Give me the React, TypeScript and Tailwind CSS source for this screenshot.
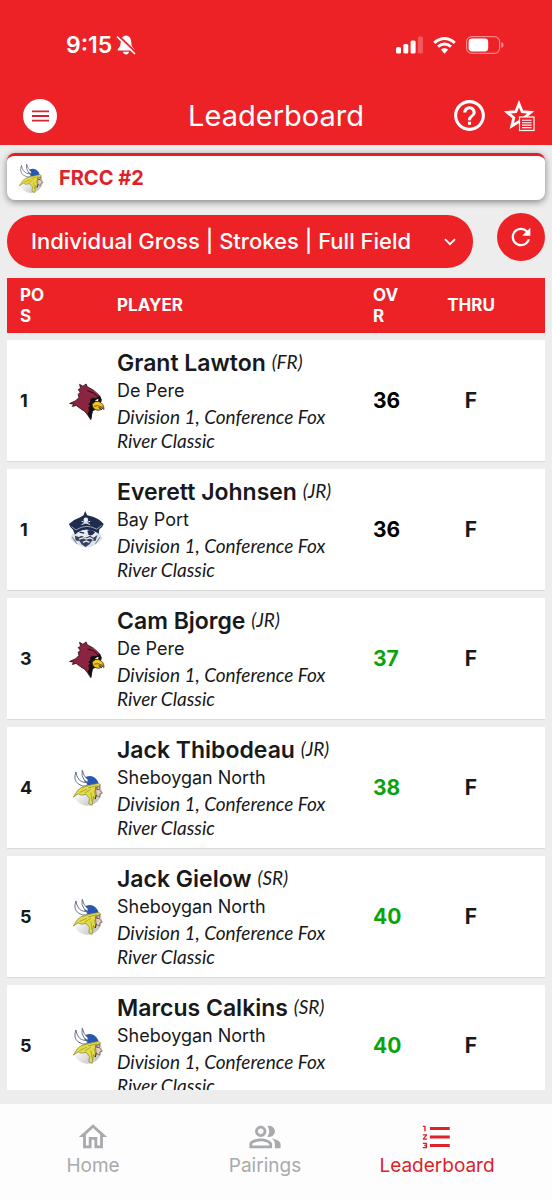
import { useState } from 'react';
import type { IconType } from 'react-icons';
import {
  MdFormatListNumbered,
  MdHelpOutline,
  MdOutlineHome,
  MdOutlinePeopleAlt,
  MdRefresh,
} from 'react-icons/md';

type Team = 'cardinal' | 'pirate' | 'viking';

type Player = {
  pos: number;
  name: string;
  year: string;
  school: string;
  team: Team;
  score: number;
  over: boolean;
};

const DIVISION = 'Division 1, Conference Fox River Classic';

const PLAYERS: Player[] = [
  { pos: 1, name: 'Grant Lawton', year: 'FR', school: 'De Pere', team: 'cardinal', score: 36, over: false },
  { pos: 1, name: 'Everett Johnsen', year: 'JR', school: 'Bay Port', team: 'pirate', score: 36, over: false },
  { pos: 3, name: 'Cam Bjorge', year: 'JR', school: 'De Pere', team: 'cardinal', score: 37, over: true },
  { pos: 4, name: 'Jack Thibodeau', year: 'JR', school: 'Sheboygan North', team: 'viking', score: 38, over: true },
  { pos: 5, name: 'Jack Gielow', year: 'SR', school: 'Sheboygan North', team: 'viking', score: 40, over: true },
  { pos: 5, name: 'Marcus Calkins', year: 'SR', school: 'Sheboygan North', team: 'viking', score: 40, over: true },
];

const TABS: { label: string; icon: IconType }[] = [
  { label: 'Home', icon: MdOutlineHome },
  { label: 'Pairings', icon: MdOutlinePeopleAlt },
  { label: 'Leaderboard', icon: MdFormatListNumbered },
];

function Cardinal() {
  return (
    <svg viewBox="25 33 115 115" className="size-[38px]" aria-hidden="true">
      <path d="M60 40 L70 46 L80 39 L83 47 Q104 56 118 72 L126 86 L120 98 L108 112 L98 122 L94 147 L84 132 L76 122 Q62 114 50 104 L38 107 L42 100 L30 98 L48 90 L58 80 L56 70 L62 64 L56 56 L63 52 Z" fill="#8a2440" stroke="#2a0d14" strokeWidth="2.5" strokeLinejoin="round" />
      <path d="M92 86 Q98 78 110 82 L122 74 L127 92 L106 104 L112 116 L100 120 L95 146 L84 130 Q92 118 86 112 L92 104 L86 100 L93 94 Z" fill="#121013" />
      <path d="M84 60 Q104 62 118 80" fill="none" stroke="#2a0d14" strokeWidth="3" />
      <path d="M98 100 Q108 88 118 92 Q134 98 134 116 Q128 110 118 111 L128 116 Q116 121 106 116 Q98 110 98 100Z" fill="#f3c524" stroke="#3a2a08" strokeWidth="2.5" />
      <path d="M104 106 Q116 102 131 110" fill="none" stroke="#3a2a08" strokeWidth="2" />
      <path d="M106 89 L117 84 L116 91 Z" fill="#fff" />
    </svg>
  );
}

function Pirate() {
  return (
    <svg viewBox="25 33 115 115" className="size-[38px]" aria-hidden="true">
      <path d="M38 100 L122 98 L130 116 Q112 140 80 144 Q48 138 32 116 Z" fill="#dfe3e8" />
      <path d="M28 72 Q44 58 62 52 L72 46 L77 33 L83 46 L98 50 Q118 56 133 72 Q130 82 120 88 L118 102 Q80 76 46 104 L40 90 Q32 84 28 72 Z" fill="#1d2c4f" />
      <path d="M36 80 Q44 88 50 90 Q80 70 112 88 Q120 84 126 76" fill="none" stroke="#b4bccb" strokeWidth="2.5" />
      <circle cx="79" cy="60" r="7" fill="#edf0f4" />
      <path d="M66 64 L92 74 M92 64 L66 74" stroke="#edf0f4" strokeWidth="3" />
      <path d="M54 98 Q80 82 108 98 L106 116 L54 116 Z" fill="#eceef1" />
      <path d="M60 97 L74 100 M86 94 Q96 90 104 98 Q98 107 88 104Z" stroke="#1d2c4f" strokeWidth="4" fill="#1d2c4f" />
      <path d="M46 108 L58 112 L66 108 L78 114 L92 108 L102 114 L114 106 L108 124 L98 122 L90 134 L78 142 L66 134 L60 124 L48 122 Z" fill="#34425f" />
      <path d="M58 118 L72 114 L80 118 L92 114 L102 120 M70 128 L80 124 L90 128 M76 102 L82 108 L86 101" fill="none" stroke="#dfe3e8" strokeWidth="4" />
      <path d="M38 112 L52 132 M122 112 L108 132" stroke="#68758f" strokeWidth="3" />
    </svg>
  );
}

function Viking({ className }: { className: string }) {
  return (
    <svg viewBox="25 33 115 115" className={className} aria-hidden="true">
      <defs>
        <linearGradient id="vikingDisc" x1="0" y1="0" x2="1" y2="1">
          <stop offset="0.3" stopColor="#ffffff" />
          <stop offset="1" stopColor="#b4b4b8" />
        </linearGradient>
      </defs>
      <circle cx="84" cy="101" r="43" fill="url(#vikingDisc)" />
      <path d="M74 60 Q88 50 104 58 Q116 66 117 78 L86 82 Q72 74 74 60Z" fill="#2657b4" />
      <path d="M49 42 Q40 66 56 78 Q68 88 84 84 L82 74 Q62 74 55 60 Q50 52 49 42Z" fill="#fff" stroke="#4a5670" strokeWidth="2.5" />
      <path d="M68 37 Q64 54 74 66 L84 74 L86 66 Q72 56 68 37Z" fill="#fff" stroke="#4a5670" strokeWidth="2.5" />
      <path d="M64 90 L84 84 L118 76 L124 82 L108 88 L116 100 L112 112 L106 124 L102 116 L98 143 L88 138 L90 122 L80 110 L64 112 L56 108 L41 118 L54 98 Z" fill="#e4dc45" stroke="#7d7a30" strokeWidth="2" />
      <path d="M108 90 L122 86 L120 96 L129 106 L122 108 L120 118 L110 112 Z" fill="#e9cdb3" stroke="#51474a" strokeWidth="2" />
      <path d="M60 104 L82 94 M76 106 L94 94 M94 104 L98 130 M86 90 L112 84 M104 98 L108 114" stroke="#8c8833" strokeWidth="2" />
      <path d="M110 93 L118 95 M110 112 L108 124" stroke="#2d2a37" strokeWidth="3" />
    </svg>
  );
}

function TeamLogo({ team }: { team: Team }) {
  if (team === 'cardinal') return <Cardinal />;
  if (team === 'pirate') return <Pirate />;
  return <Viking className="size-[38px]" />;
}

function StatusBar() {
  return (
    <div className="flex h-[90px] items-center justify-between pr-[48px] pl-[66px]">
      <div className="flex items-center gap-1">
        <span className="text-[23px] leading-7 font-semibold">9:15</span>
        <svg viewBox="0 0 20 20" className="size-5" aria-hidden="true">
          <path d="M10 0.5 C6.5 0.8 5 3.5 4.8 7 C4.6 11 3.5 12.5 1.8 14 Q1 15.5 2.5 15.5 H17.5 Q19 15.5 18.2 14 C16.5 12.5 15.4 11 15.2 7 C15 3.5 13.5 0.8 10 0.5Z M6.8 16.8 H13.2 Q12.5 19.5 10 19.5 Q7.5 19.5 6.8 16.8Z" fill="#fff" />
          <path d="M2.4 0.6 L20 17.6" stroke="#ed2227" strokeWidth="2" />
          <path d="M1 1.6 L19 19" stroke="#fff" strokeWidth="1.6" />
        </svg>
      </div>
      <div className="flex items-center gap-[10px]">
        <svg viewBox="0 0 27 18" className="h-[18px] w-[27px]" fill="#fff" aria-hidden="true">
          <rect x="0" y="11" width="5" height="6.5" rx="1.5" />
          <rect x="7.3" y="8" width="5" height="9.5" rx="1.5" />
          <rect x="14.6" y="4.5" width="5" height="13" rx="1.5" />
          <rect x="21.9" y="0.5" width="5" height="17" rx="1.5" opacity="0.25" />
        </svg>
        <svg viewBox="0 0 23 17" className="h-[17px] w-[23px]" fill="none" stroke="#fff" strokeWidth="3" aria-hidden="true">
          <path d="M1.2 5.8 Q11.5 -2.8 21.8 5.8" />
          <path d="M5 9.7 Q11.5 4.4 18 9.7" />
          <path d="M7.8 12.6 Q11.5 9.8 15.2 12.6 L11.5 16.8Z" fill="#fff" stroke="none" />
        </svg>
        <svg viewBox="0 0 38 18" className="h-[18px] w-[38px]" aria-hidden="true">
          <rect x="0.6" y="0.6" width="33" height="16.8" rx="5.2" fill="none" stroke="#fff" strokeOpacity="0.45" strokeWidth="1.2" />
          <rect x="2.6" y="2.6" width="19.6" height="12.8" rx="3.4" fill="#fff" />
          <path d="M35.4 6 Q37.6 7 37.6 9 Q37.6 11 35.4 12Z" fill="#fff" fillOpacity="0.5" />
        </svg>
      </div>
    </div>
  );
}

function TitleBar() {
  return (
    <div className="grid grid-cols-[1fr_auto_1fr] items-center px-4">
      <button aria-label="Menu" className="ml-[7px] flex size-[34px] items-center justify-center rounded-full bg-white">
        <svg viewBox="0 0 17 12" className="h-3 w-[17px]" stroke="#d3262c" strokeWidth="1.8" aria-hidden="true">
          <path d="M0 1.4H17M0 6H17M0 10.6H17" />
        </svg>
      </button>
      <h1 className="text-[29px] leading-9 font-normal">Leaderboard</h1>
      <div className="flex items-center justify-end gap-[14px]">
        <button aria-label="Help">
          <MdHelpOutline className="size-[37px]" />
        </button>
        <button aria-label="Favorites">
          <svg viewBox="0 0 34 34" className="size-[34px]" aria-hidden="true">
            <path d="M17 4.8 L20.2 12.7 L28.7 13.3 L22.2 18.8 L24.2 27 L17 22.6 L9.8 27 L11.8 18.8 L5.3 13.3 L13.8 12.7Z" fill="none" stroke="#fff" strokeWidth="2.8" />
            <rect x="17.5" y="18" width="14.5" height="13.5" fill="#ed2227" stroke="#fff" strokeWidth="1.2" />
            <path d="M20 21.2H29.6M20 23.7H29.6M20 26.1H29.6M20 28.6H29.6" stroke="#fff" strokeWidth="1.1" />
          </svg>
        </button>
      </div>
    </div>
  );
}

function PlayerRow({ player }: { player: Player }) {
  return (
    <tr className="h-[122px] bg-white">
      <td className="border-b border-[#d9dade] pl-[13px] text-[18px] font-bold">{player.pos}</td>
      <td className="border-b border-[#d9dade]">
        <div className="flex justify-center">
          <TeamLogo team={player.team} />
        </div>
      </td>
      <td className="border-b border-[#d9dade] pr-6">
        <div className="text-[23px] leading-7 font-semibold">
          {player.name} <span className="align-[2px] font-[Lato,sans-serif] text-[19px] leading-5 font-normal italic">({player.year})</span>
        </div>
        <div className="text-[18px] leading-7">{player.school}</div>
        <div className="font-[Lato,sans-serif] text-[19px] leading-6 italic">{DIVISION}</div>
      </td>
      <td className={player.over ? 'border-b border-[#d9dade] text-[21px] font-bold text-[#09a40c]' : 'border-b border-[#d9dade] text-[21px] font-bold text-black'}>
        {player.score}
      </td>
      <td className="border-b border-[#d9dade] pr-[23px] text-center text-[21px] font-bold">F</td>
    </tr>
  );
}

export default function App() {
  const [tab, setTab] = useState('Leaderboard');

  return (
    <div className="flex h-screen flex-col bg-[#ededed] font-[Inter,sans-serif] text-[#18191b]">
      <header className="flex shrink-0 flex-col gap-[7px] bg-[#ed2227] pb-[11px] text-white">
        <StatusBar />
        <TitleBar />
      </header>

      <main className="flex min-h-0 flex-1 flex-col px-[7px] pt-2 pb-[14px]">
        {/* Event */}
        <div className="flex h-[47px] shrink-0 items-center gap-[13px] rounded-lg border-t-[3px] border-[#e21f26] bg-white pl-2 shadow-[0_2px_7px_rgba(0,0,0,0.45)]">
          <Viking className="size-[31px]" />
          <span className="text-[20px] font-bold text-[#dc2329]">FRCC #2</span>
        </div>

        {/* Filter */}
        <div className="mt-[13px] flex shrink-0 items-start gap-6">
          <div className="mt-[2px] grid flex-1 items-center">
            <select
              aria-label="Leaderboard view"
              className="col-start-1 row-start-1 h-[53px] w-full appearance-none rounded-[26px] bg-[#ed2227] pr-12 pl-6 text-[22px] font-medium text-white"
            >
              <option>Individual Gross | Strokes | Full Field</option>
            </select>
            <svg viewBox="0 0 12 8" className="pointer-events-none col-start-1 row-start-1 mr-[17px] h-2 w-3 justify-self-end" aria-hidden="true">
              <path d="M1 1.2 L6 6.2 L11 1.2" fill="none" stroke="#fff" strokeWidth="1.8" />
            </svg>
          </div>
          <button aria-label="Refresh" className="flex size-12 items-center justify-center rounded-full bg-[#ed2227] text-white">
            <MdRefresh className="size-7" />
          </button>
        </div>

        {/* Standings */}
        <div className="mt-[3px] min-h-0 flex-1 overflow-hidden">
          <table className="w-full table-fixed border-separate border-spacing-x-0 border-spacing-y-[7px]">
            <colgroup>
              <col className="w-[50px]" />
              <col className="w-[60px]" />
              <col />
              <col className="w-[47px]" />
              <col className="w-[125px]" />
            </colgroup>
            <thead>
              <tr className="h-[55px] bg-[#ed2227] text-left text-[17px] leading-[21px] text-white">
                <th scope="col" className="pr-2 pl-[13px] font-bold break-all">POS</th>
                <th aria-label="Team" />
                <th scope="col" className="font-bold">PLAYER</th>
                <th scope="col" className="pr-3 font-bold break-all">OVR</th>
                <th scope="col" className="pr-[23px] text-center font-bold">THRU</th>
              </tr>
            </thead>
            <tbody>
              {PLAYERS.map((player) => (
                <PlayerRow key={player.name} player={player} />
              ))}
            </tbody>
          </table>
        </div>
      </main>

      <nav className="grid h-24 shrink-0 grid-cols-3 bg-[#fdfdfd] pr-[29px] pl-[7px]">
        {TABS.map(({ label, icon: Icon }) => (
          <button
            key={label}
            onClick={() => setTab(label)}
            className={`flex flex-col items-center pt-4 text-[19px] leading-6 ${tab === label ? 'text-[#dc2329]' : 'text-[#a9aaad]'}`}
          >
            <Icon className="size-[34px]" />
            {label}
          </button>
        ))}
      </nav>
    </div>
  );
}
